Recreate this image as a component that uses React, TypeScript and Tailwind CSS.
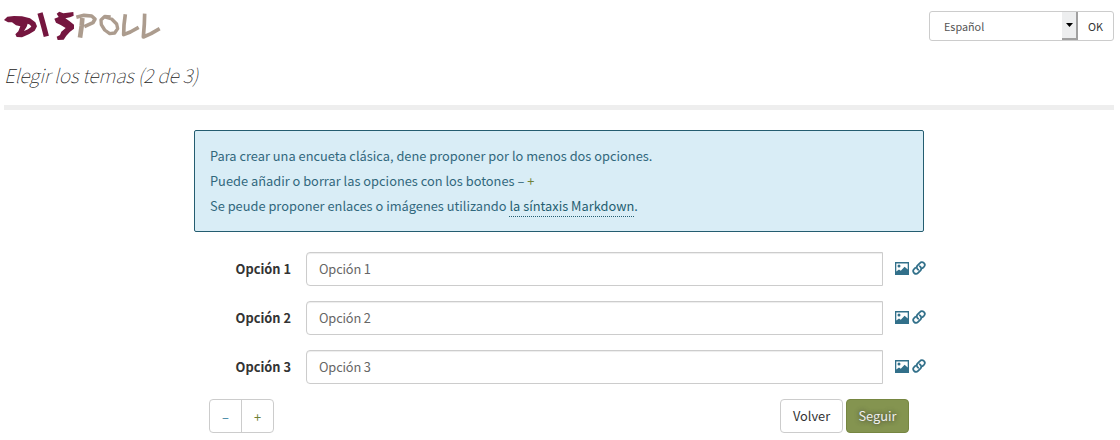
import React from "react";

function Logo() {
  return (
    <svg className="block h-[50px] w-[170px] shrink-0" viewBox="0 0 510 150" fill="none" strokeLinejoin="round" aria-label="Dispoll">
      <g stroke="#75163f">
        <path fill="#75163f" fillRule="evenodd" stroke="none" d="M12 60 L22 50 42 48 66 49 90 55 106 67 111 79 104 92 88 102 66 112 50 111 46 103 55 94 61 79 48 76 36 67 24 67ZM83 71 L80 80 72 93 84 88 94 80 90 74Z" />
        <path d="M120 39 L127 64 133 86 139 109" strokeWidth="16" />
        <path fill="#75163f" stroke="none" d="M170 41 L178 35 190 40 220 36 221 47 210 52 196 55 208 63 222 74 222 86 210 95 199 107 191 119 173 120 170 110 180 105 184 95 197 84 182 75 168 68 163 56 176 51Z" />
      </g>
      <g stroke="#ac9c8e" strokeWidth="11">
        <path d="M247 54 L245 78 240 113" strokeWidth="14" />
        <path d="M229 52 L252 46 275 48 285 57 279 68 253 80" />
        <path d="M314 51 L335 57 350 72 353 86 344 99 329 101 314 90 304 74 303 60 314 49 332 51" strokeWidth="10" />
        <path d="M376 43 L372 75 371 104 391 96 416 82" />
        <path d="M434 41 L433 72 430 111 453 101 479 86" />
      </g>
    </svg>
  );
}

function PictureIcon() {
  return (
    <svg className="block h-[13px] w-[14px]" viewBox="0 0 14 13" aria-hidden="true">
      <path fill="#32708a" fillRule="evenodd" d="M0 0H14V13H0ZM1.3 1.5V9.5L4 7.4 5.8 8.8 9.6 4.8 12.7 7.5V1.5Z" />
      <circle cx="4" cy="4" r="1.5" fill="#32708a" />
    </svg>
  );
}

function LinkIcon() {
  return (
    <svg className="block h-[14px] w-[14px]" viewBox="0 0 14 14" fill="none" stroke="#32708a" strokeWidth="1.8" strokeLinecap="round" aria-hidden="true">
      <path d="M6.2 8.7C4.5 7.6 4.4 5.8 5.4 4.7L7.9 2.1C9 .9 10.6.8 11.8 1.9 13 3 13 4.7 11.9 5.9L10.6 7.2" />
      <path d="M7.8 5.3C9.5 6.4 9.6 8.2 8.6 9.3L6.1 11.9C4.9 13.1 3.3 13.1 2.1 12 1 10.9 1 9.2 2.1 8L3.3 6.8" />
    </svg>
  );
}

function Option({ n }: { n: number }) {
  return (
    <div className="flex h-[34px] items-center">
      <label className="w-[112px] pr-[15px] pb-px text-right font-bold text-[#333]">Opción {n}</label>
      <div className="flex h-[34px] w-[577px] items-center rounded-l-[4px] border border-[#ccc] bg-white px-3 pb-px tracking-[-0.15px] text-[#666] shadow-[inset_0_1px_1px_rgba(0,0,0,0.075)]">
        Opción {n}
      </div>
      <div className="ml-3 flex items-center gap-[3px] pb-[2px]">
        <PictureIcon />
        <LinkIcon />
      </div>
    </div>
  );
}

export default function App() {
  return (
    <div className="h-[440px] w-[1120px] overflow-hidden bg-white font-['Noto_Sans_CJK_SC','Noto_Sans',sans-serif] text-[12.8px] leading-[25px] whitespace-nowrap text-[#333]">
      <header className="flex h-[50px] items-start justify-between pr-[6px]">
        <Logo />
        <div className="mt-[11px] flex h-[30px] w-[185px] overflow-hidden rounded-[3px] border border-[#ccc] text-[10.8px] text-[#555]">
          <div className="flex flex-1 items-center pl-[14px]">Español</div>
          <div className="flex w-4 items-center justify-center border-r-2 border-b-2 border-[#a0a0a0] bg-[#edeeef]">
            <svg className="h-1 w-[7px]" viewBox="0 0 7 4"><path d="M0 0H7L3.5 4Z" fill="#000" /></svg>
          </div>
          <div className="flex w-[35px] items-center justify-center text-[#333]">OK</div>
        </div>
      </header>
      <h1 className="mr-[6px] ml-1 h-[60px] border-b-[5px] border-[#eee] pt-3 text-[19.2px] leading-[26px] font-thin tracking-[-0.15px] text-[#222] italic">
        Elegir los temas (2 de 3)
      </h1>
      <main className="ml-[194px] w-[732px] pt-5">
        <div className="h-[102px] w-[730px] rounded-[2px] border border-[#245d70] bg-[#d9edf6] px-[15px] pt-3 tracking-[0.015px] text-[#31687d]">
          <p>Para crear una encueta clásica, dene proponer por lo menos dos opciones.</p>
          <p>Puede añadir o borrar las opciones con los botones – <span className="text-[#6f8237]">+</span></p>
          <p>Se peude proponer enlaces o imágenes utilizando <span className="inline-block h-6 border-b border-dotted border-[#245d70] align-top text-[#245d70]">la síntaxis Markdown</span>.</p>
        </div>
        <div className="mt-5 flex flex-col gap-[15px]">
          <Option n={1} />
          <Option n={2} />
          <Option n={3} />
        </div>
        <div className="mt-[15px] flex justify-between pr-[17px] pl-[15px]">
          <div className="flex h-[34px] w-[65px] rounded-[4px] border border-[#ccc]">
            <button className="flex flex-1 items-center justify-center border-r border-[#ccc] text-[#31809f]">–</button>
            <button className="flex flex-1 items-center justify-center text-[#6f8237]">+</button>
          </div>
          <div className="flex gap-[3px]">
            <button className="h-[34px] w-[63px] rounded-[4px] border border-[#ccc] pb-px">Volver</button>
            <button className="h-[34px] w-[63px] rounded-[4px] border border-[#768641] bg-[#849450] pb-px text-[#eee] [text-shadow:0_0_5px_#333]">Seguir</button>
          </div>
        </div>
      </main>
    </div>
  );
}
